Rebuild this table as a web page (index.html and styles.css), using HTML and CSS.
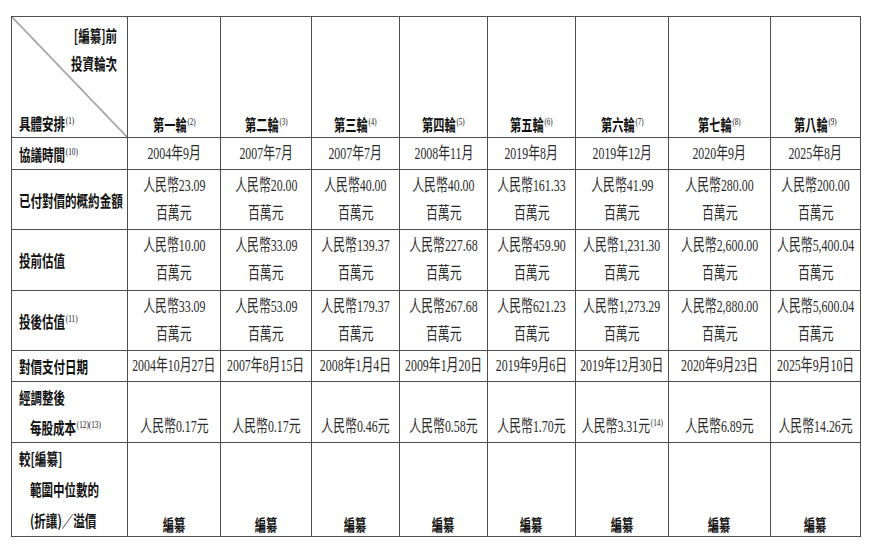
FILE: index.html
```html
<!DOCTYPE html>
<html lang="zh-Hant">
<head>
<meta charset="utf-8">
<title>投資輪次</title>
<link rel="stylesheet" href="styles.css">
</head>
<body>
<table class="t">
  <colgroup>
    <col class="w116"><col class="w93"><col class="w91"><col class="w88"><col class="w88"><col class="w88"><col class="w93"><col class="w102"><col class="w90">
  </colgroup>
  <tr class="h0">
    <td class="corner">
      <div class="cn">
        <span class="r">[編纂]前</span>
        <span class="r">投資輪次</span>
        <span class="bl">具體安排<sup>(1)</sup></span>
      </div>
    </td>
    <td class="bot"><div class="v hb"><span>第一輪<sup>(2)</sup></span></div></td>
    <td class="bot"><div class="v hb"><span>第二輪<sup>(3)</sup></span></div></td>
    <td class="bot"><div class="v hb"><span>第三輪<sup>(4)</sup></span></div></td>
    <td class="bot"><div class="v hb"><span>第四輪<sup>(5)</sup></span></div></td>
    <td class="bot"><div class="v hb"><span>第五輪<sup>(6)</sup></span></div></td>
    <td class="bot"><div class="v hb"><span>第六輪<sup>(7)</sup></span></div></td>
    <td class="bot"><div class="v hb"><span>第七輪<sup>(8)</sup></span></div></td>
    <td class="bot"><div class="v hb"><span>第八輪<sup>(9)</sup></span></div></td>
  </tr>
  <tr class="h1">
    <td><div class="l"><span>協議時間<sup>(10)</sup></span></div></td>
    <td><div class="v s"><span>2004年9月</span></div></td>
    <td><div class="v s"><span>2007年7月</span></div></td>
    <td><div class="v s"><span>2007年7月</span></div></td>
    <td><div class="v s"><span>2008年11月</span></div></td>
    <td><div class="v s"><span>2019年8月</span></div></td>
    <td><div class="v s"><span>2019年12月</span></div></td>
    <td><div class="v s"><span>2020年9月</span></div></td>
    <td><div class="v s"><span>2025年8月</span></div></td>
  </tr>
  <tr class="h2">
    <td><div class="l"><span>已付對價的概約金額</span></div></td>
    <td><div class="v"><span>人民幣23.09</span><span>百萬元</span></div></td>
    <td><div class="v"><span>人民幣20.00</span><span>百萬元</span></div></td>
    <td><div class="v"><span>人民幣40.00</span><span>百萬元</span></div></td>
    <td><div class="v"><span>人民幣40.00</span><span>百萬元</span></div></td>
    <td><div class="v"><span>人民幣161.33</span><span>百萬元</span></div></td>
    <td><div class="v"><span>人民幣41.99</span><span>百萬元</span></div></td>
    <td><div class="v"><span>人民幣280.00</span><span>百萬元</span></div></td>
    <td><div class="v"><span>人民幣200.00</span><span>百萬元</span></div></td>
  </tr>
  <tr class="h3">
    <td><div class="l"><span>投前估值</span></div></td>
    <td><div class="v"><span>人民幣10.00</span><span>百萬元</span></div></td>
    <td><div class="v"><span>人民幣33.09</span><span>百萬元</span></div></td>
    <td><div class="v"><span>人民幣139.37</span><span>百萬元</span></div></td>
    <td><div class="v"><span>人民幣227.68</span><span>百萬元</span></div></td>
    <td><div class="v"><span>人民幣459.90</span><span>百萬元</span></div></td>
    <td><div class="v"><span>人民幣1,231.30</span><span>百萬元</span></div></td>
    <td><div class="v"><span>人民幣2,600.00</span><span>百萬元</span></div></td>
    <td><div class="v"><span>人民幣5,400.04</span><span>百萬元</span></div></td>
  </tr>
  <tr class="h4">
    <td><div class="l"><span>投後估值<sup>(11)</sup></span></div></td>
    <td><div class="v"><span>人民幣33.09</span><span>百萬元</span></div></td>
    <td><div class="v"><span>人民幣53.09</span><span>百萬元</span></div></td>
    <td><div class="v"><span>人民幣179.37</span><span>百萬元</span></div></td>
    <td><div class="v"><span>人民幣267.68</span><span>百萬元</span></div></td>
    <td><div class="v"><span>人民幣621.23</span><span>百萬元</span></div></td>
    <td><div class="v"><span>人民幣1,273.29</span><span>百萬元</span></div></td>
    <td><div class="v"><span>人民幣2,880.00</span><span>百萬元</span></div></td>
    <td><div class="v"><span>人民幣5,600.04</span><span>百萬元</span></div></td>
  </tr>
  <tr class="h5">
    <td><div class="l"><span>對價支付日期</span></div></td>
    <td><div class="v s"><span>2004年10月27日</span></div></td>
    <td><div class="v s"><span>2007年8月15日</span></div></td>
    <td><div class="v s"><span>2008年1月4日</span></div></td>
    <td><div class="v s"><span>2009年1月20日</span></div></td>
    <td><div class="v s"><span>2019年9月6日</span></div></td>
    <td><div class="v s"><span>2019年12月30日</span></div></td>
    <td><div class="v s"><span>2020年9月23日</span></div></td>
    <td><div class="v s"><span>2025年9月10日</span></div></td>
  </tr>
  <tr class="h6">
    <td class="top"><div class="l l30"><span>經調整後</span><span class="ind">每股成本<sup>(12)(13)</sup></span></div></td>
    <td class="bot"><div class="v s"><span>人民幣0.17元</span></div></td>
    <td class="bot"><div class="v s"><span>人民幣0.17元</span></div></td>
    <td class="bot"><div class="v s"><span>人民幣0.46元</span></div></td>
    <td class="bot"><div class="v s"><span>人民幣0.58元</span></div></td>
    <td class="bot"><div class="v s"><span>人民幣1.70元</span></div></td>
    <td class="bot"><div class="v s"><span>人民幣3.31元<sup>(14)</sup></span></div></td>
    <td class="bot"><div class="v s"><span>人民幣6.89元</span></div></td>
    <td class="bot"><div class="v s"><span>人民幣14.26元</span></div></td>
  </tr>
  <tr class="h7">
    <td class="top"><div class="l l31"><span>較[編纂]</span><span class="ind">範圍中位數的</span><span class="ind">(折讓)／溢價</span></div></td>
    <td class="bot"><div class="v hb ed"><span>編纂</span></div></td>
    <td class="bot"><div class="v hb ed"><span>編纂</span></div></td>
    <td class="bot"><div class="v hb ed"><span>編纂</span></div></td>
    <td class="bot"><div class="v hb ed"><span>編纂</span></div></td>
    <td class="bot"><div class="v hb ed"><span>編纂</span></div></td>
    <td class="bot"><div class="v hb ed"><span>編纂</span></div></td>
    <td class="bot"><div class="v hb ed"><span>編纂</span></div></td>
    <td class="bot"><div class="v hb ed"><span>編纂</span></div></td>
  </tr>
</table>
</body>
</html>
```
FILE: styles.css
```css
html, body {
  margin: 0;
  padding: 0;
  background: #ffffff;
}

.t {
  border-collapse: collapse;
  table-layout: fixed;
  width: 849px;
  margin: 16px 0 0 11px;
}

.w116 { width: 116px; }
.w93 { width: 93px; }
.w91 { width: 91px; }
.w88 { width: 88px; }
.w102 { width: 102px; }
.w90 { width: 90px; }

.t td {
  border: 1px solid #4f4f4f;
  padding: 0;
  vertical-align: middle;
}

.t td.bot { vertical-align: bottom; }
.t td.top { vertical-align: top; }

.h0 { height: 121px; }
.h1 { height: 32px; }
.h2 { height: 60px; }
.h3 { height: 61px; }
.h4 { height: 60px; }
.h5 { height: 31px; }
.h6 { height: 61px; }
.h7 { height: 90px; }

/* value cells */
.v {
  display: flex;
  flex-direction: column;
  align-items: center;
  font-family: "Liberation Serif", "Noto Sans CJK TC", serif;
  font-size: 16.5px;
  line-height: 28px;
  color: #2a2a2a;
}

.v span {
  white-space: nowrap;
  transform: scaleX(0.72);
}

.v.s { line-height: 30px; }

.v.hb {
  font-family: "Noto Sans CJK TC", sans-serif;
  font-weight: 700;
  font-size: 16px;
  line-height: 26px;
  color: #111111;
}

.v.hb span { transform: scaleX(0.7); }

.v.ed { line-height: 24px; }

/* label cells */
.l {
  display: flex;
  flex-direction: column;
  align-items: flex-start;
  padding-left: 7px;
  font-family: "Noto Sans CJK TC", sans-serif;
  font-weight: 700;
  font-size: 16px;
  line-height: 28px;
  color: #111111;
}

.l span {
  white-space: nowrap;
  transform: scaleX(0.72);
  transform-origin: left center;
}

.l .ind { margin-left: 11px; }
.l30 { line-height: 30px; }
.l31 { line-height: 31px; }

/* corner header */
.t td.corner {
  vertical-align: top;
  background: linear-gradient(to top right, transparent calc(50% - 0.8px), #3a3a3a 50%, transparent calc(50% + 0.8px));
}

.cn {
  display: flex;
  flex-direction: column;
  box-sizing: border-box;
  height: 119px;
  padding: 4px 10px 0 7px;
  font-family: "Noto Sans CJK TC", sans-serif;
  font-weight: 700;
  font-size: 16px;
  line-height: 28px;
  color: #111111;
}

.cn span {
  white-space: nowrap;
  transform: scaleX(0.72);
}

.cn .r {
  align-self: flex-end;
  transform-origin: right center;
}

.cn .bl {
  margin-top: auto;
  line-height: 26px;
  align-self: flex-start;
  transform-origin: left center;
}

sup {
  font-family: "Liberation Serif", serif;
  font-weight: 400;
  font-size: 10px;
  line-height: 0;
  vertical-align: 6px;
  margin-left: 1px;
}
```
